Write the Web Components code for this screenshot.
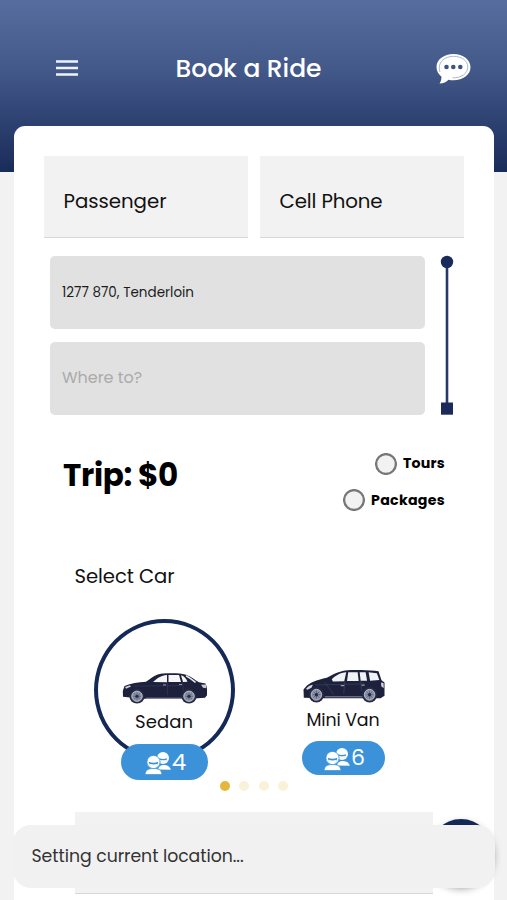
<!DOCTYPE html>
<html lang="en">
<head>
<meta charset="utf-8">
<meta name="viewport" content="width=device-width, initial-scale=1">
<title>Book a Ride</title>
<style>
    html, body { margin: 0; height: 100%; overflow: hidden; }
    body { background: #f2f2f2; font-family: Poppins, Inter, sans-serif; color: #111; }
</style>
</head>
<body>
<ride-app></ride-app>

<script>
class FitText extends HTMLElement {
    // Keeps a label at the width given in its "w" attribute by spreading the letters.
    constructor() {
        super();
        this.attachShadow({ mode: 'open' });
        this.shadowRoot.innerHTML = `
        <style>
            :host { display: inline-block; white-space: nowrap; }
            span { display: inline-block; }
        </style>
        <span><slot></slot></span>`;
    }

    connectedCallback() {
        const span = this.shadowRoot.querySelector('span');
        const want = parseFloat(this.getAttribute('w'));
        const n = this.textContent.length;
        const extra = (want - span.getBoundingClientRect().width) / n;
        span.style.letterSpacing = extra.toFixed(3) + 'px';
    }
}

class AppHeader extends HTMLElement {
    constructor() {
        super();
        this.attachShadow({ mode: 'open' });
        this.shadowRoot.innerHTML = `
        <style>
            :host {
                display: grid; grid-template-columns: 120px 1fr 120px; align-items: center;
                height: 172px; box-sizing: border-box; padding-bottom: 35px; margin-bottom: -46px;
                background: linear-gradient(#576d9f, #435989 40%, #2c4170 72%, #192b59);
                color: #fff;
            }
            .title { text-align: center; font-size: 25px; font-weight: 500; padding-right: 10px; }
            .menu { margin: -1px 0 0 56px; display: block; }
            .chat { justify-self: end; margin-right: 36.5px; display: block; }
        </style>
        <svg class="menu" width="22" height="16" viewBox="0 0 22 16">
            <path d="M0 1.500h22M0 8h22M0 14.500h22" stroke="#edf3fd" stroke-width="2.600"/>
        </svg>
        <div class="title"><slot></slot></div>
        <svg class="chat" width="36" height="32" viewBox="0 0 36 32">
            <path d="M19 1.500C9.500 1.500 2 7 2 14.500c0 4 2 7.500 5 9.700C7 27 6 29.500 5 31c4 0 7-1.500 9-3.800 1.600.4 3.300.5 5 .5 9.500 0 17-5.600 17-13S28.500 1.500 19 1.500z" transform="translate(-.5 -.5)" fill="#fff"/>
            <path d="M5 19C1.800 10 9 3.300 18.500 3.300c8 0 14.300 4.500 14.300 10.500 0 7-6.800 11.300-15.300 11" fill="none" stroke="#8a98b8" stroke-width=".7"/>
            <circle cx="11.500" cy="14" r="2.300" fill="#3e5383"/>
            <circle cx="18.300" cy="14" r="2.300" fill="#3e5383"/>
            <circle cx="25.300" cy="14" r="2.300" fill="#3e5383"/>
        </svg>`;
    }
}

class TextField extends HTMLElement {
    constructor() {
        super();
        this.attachShadow({ mode: 'open' });
        this.shadowRoot.innerHTML = `
        <style>
            :host {
                display: flex; align-items: center; box-sizing: border-box;
                height: 82px; padding: 8px 20px 0 19.5px; font-size: 19.8px;
                background: #f2f2f2; border-bottom: 1.5px solid #d8d8d8;
            }
        </style>
        <slot></slot>`;
    }
}

class RouteStop extends HTMLElement {
    constructor() {
        super();
        this.attachShadow({ mode: 'open' });
        this.shadowRoot.innerHTML = `
        <style>
            :host {
                display: flex; align-items: center; height: 73px; padding: 0 12px; box-sizing: border-box;
                border-radius: 5px; background: #e1e1e1; font-size: 13.5px; color: #1c1c1c;
            }
            :host([empty]) { font-size: 16px; color: #ababab; padding-bottom: 1px; }
        </style>
        <slot></slot>`;
    }
}

class RoutePicker extends HTMLElement {
    constructor() {
        super();
        this.attachShadow({ mode: 'open' });
        this.shadowRoot.innerHTML = `
        <style>
            :host { display: flex; gap: 16px; margin: 18.4px 11px 0 6px; height: 159px; }
            .stops { width: 375px; display: flex; flex-direction: column; gap: 12.6px; }
            svg { display: block; overflow: visible; }
        </style>
        <div class="stops"><slot></slot></div>
        <svg width="12" height="159" viewBox="0 0 12 159">
            <path d="M6 6v146" stroke="#26386a" stroke-width="2.600"/>
            <circle cx="6" cy="6" r="6.200" fill="#192b5b"/>
            <path d="M0 146.500h12v12.200H0z" fill="#192b5b"/>
        </svg>`;
    }
}

class RadioOption extends HTMLElement {
    constructor() {
        super();
        this.attachShadow({ mode: 'open' });
        this.shadowRoot.innerHTML = `
        <style>
            :host { display: flex; align-items: center; gap: 6px; font-size: 14.2px; font-weight: 700; color: #000; }
            svg { display: block; }
        </style>
        <svg width="22" height="22" viewBox="0 0 22 22">
            <circle cx="11" cy="11" r="9.900" fill="#f2f2f2" stroke="#777" stroke-width="2.300"/>
        </svg>
        <slot></slot>`;
    }
}

const WHEEL = (x) => `
    <circle cx="${x}" cy="24" r="7.600" fill="#252a43"/>
    <circle cx="${x}" cy="24" r="5.300" fill="#8d94aa" stroke="#c9ccd8" stroke-width=".8"/>
    <path d="M${x - 4} 24h8M${x} 20v8M${x - 3} 21l6 6M${x + 3} 21l-6 6" stroke="#555d78" stroke-width=".8"/>
    <circle cx="${x}" cy="24" r="1.600" fill="#252a43"/>`;

const CARS = {
    sedan: `
        <path d="M1 24.500L.8 18.500 2.500 13.500C9 10.500 16 9.500 24 9 30 4.500 35 .8 41 .5 50-.1 58 0 64 1.800 69 3.500 73 7.500 77 9.500l6.500 1.300L85 15v8l-2 2.500-15 1H20z" fill="#1d213b"/>
        <path d="M31 9.300C35 5.500 39 2.500 45 2.100V9.500zM46.500 2h10.500l2 7.300H46.500zM59 2.300c3 .7 5 3 6.500 6.700l-4.500.3z" fill="#f6f6f8"/>
        <path d="M64 2.800c4 2 7 4.800 9.500 7" fill="none" stroke="#e4e5eb" stroke-width="1.600"/>
        <path d="M3 14.500l5-1.800 1 1.200-5 2.400zM79 12.200l5-.4.5 4-3.500-.5z" fill="#cbccd7"/>
        <path d="M24 26h36" stroke="#a3a7b8" stroke-width=".8"/>
        <path d="M45.500 10v13M60.500 10l1 8M12 13.500l45-.5" fill="none" stroke="#343957" stroke-width=".7"/>
        <path d="M41 12.300h3M57 12h3" stroke="#c4c6d1" stroke-width=".8"/>
        ${WHEEL(15)}${WHEEL(67)}`,
    van: `
        <path d="M.8 27l-.3-8L4 15c6-4.500 13-6 20-7.500C32 3 38 .8 45 .2c10-.5 23-.2 31 1L79 10l3 2v13l-4 2.500H20z" fill="#1d213b"/>
        <path d="M29 8.900C33 5.300 37.500 2.700 43.500 2.300L41.500 11l-11.500.2zM45.500 2.100h9.500l1 8.500H44.300zM57 2.100l6 .1 1.500 8.200h-6.500zM66 2.300l8.300.8 2.500 6.500-9.300.8z" fill="#f1f2f5"/>
        <path d="M3 18.500c2-2.800 4-3.800 7-4.300l-1.500 3-4 2zM78.500 12l2.500.5.3 5-2.500-1.500z" fill="#d5d6de"/>
        <path d="M22 26h38" stroke="#a3a7b8" stroke-width=".8"/>
        <path d="M42 11l-1 12M58 11l1 9M12 14.500l50-1M22 12l9 12" fill="none" stroke="#3c425e" stroke-width=".7"/>
        <path d="M38 15.200h3.500M59 14.700h3" stroke="#c4c6d1" stroke-width=".9"/>
        ${WHEEL(13.5)}${WHEEL(67)}`
};

class CarOption extends HTMLElement {
    constructor() {
        super();
        this.attachShadow({ mode: 'open' });
    }

    connectedCallback() {
        const selected = this.hasAttribute('selected');
        const box = selected ? '0 0 86 32' : '0 0 82.5 32';
        this.shadowRoot.innerHTML = `
        <style>
            :host { display: block; width: 141px; text-align: center; font-size: 18px; }
            .ring {
                box-sizing: border-box; width: 141px; height: 142px; border-radius: 50%;
                border: 4px solid transparent; padding-top: 50px;
                display: flex; flex-direction: column; align-items: center;
            }
            :host([selected]) .ring { border-color: #152957; }
            .car { display: block; width: 86px; height: 31px; flex: none; margin-left: 1px; }
            .name { height: 24px; line-height: 24px; margin-top: 6.5px; }
            .seats {
                display: flex; align-items: center; justify-content: center; gap: 1px;
                width: 87px; height: 36px; margin: -17px auto 0; position: relative;
                border-radius: 18px; background: #3b92d9; color: #fff; font-size: 23px; font-weight: 400;
                box-sizing: border-box; padding-left: 3px;
            }
            .seats svg { margin-top: 2px; }
            .seats span { line-height: 36px; }
            :host(:not([selected])) { font-size: 17.4px; }
            :host(:not([selected])) .ring { padding-top: 47px; }
            :host(:not([selected])) .car { width: 82px; height: 33px; margin-left: 2px; }
            :host(:not([selected])) .name { margin-top: 5.5px; }
            :host(:not([selected])) .seats { width: 83px; height: 34px; margin-top: -20px; font-size: 22px; }
        </style>
        <div class="ring">
            <svg class="car" viewBox="${box}" preserveAspectRatio="none">${CARS[this.getAttribute('type')]}</svg>
            <div class="name"><slot></slot></div>
        </div>
        <div class="seats">
            <svg width="26" height="24" viewBox="0 0 26 24">
                <path d="M13 18.500c1-3.500 3-4.500 5-4.500s6.500 0 7.800 4.700z" fill="#fff"/>
                <circle cx="18" cy="6.900" r="6" fill="#fff"/>
                <path d="M14 7.200q4 1.500 8 0c0 5.500-7.500 5.500-8 0z" fill="#3b92d9"/>
                <path d="M14.500 8.800q3.500 1 7 0c0 3.500-6 3.500-7 0z" fill="#fff"/>
                <path d="M0 23.500c.5-4.500 3.500-6 8.500-6s8 1.500 8.500 6z" fill="#fff" stroke="#3b92d9" stroke-width=".7"/>
                <circle cx="8.500" cy="11" r="6.600" fill="#fff" stroke="#3b92d9" stroke-width=".8"/>
                <path d="M3.800 10.700q4.700 2 9.400 0c0 7-9 7-9.400 0z" fill="#3b92d9"/>
                <path d="M4.300 12.800q4.200 1.200 8.400 0c-.7 4.800-7.500 4.800-8.400 0z" fill="#fff"/>
            </svg>
            <span>${this.getAttribute('seats')}</span>
        </div>`;
    }
}

class PageDots extends HTMLElement {
    constructor() {
        super();
        this.attachShadow({ mode: 'open' });
        this.shadowRoot.innerHTML = `
        <style>
            :host { display: flex; justify-content: center; gap: 9.6px; }
            i { width: 10px; height: 10px; border-radius: 50%; background: #e3b83c; opacity: .2; }
            i.on { opacity: 1; }
        </style>
        <i class="on"></i><i></i><i></i><i></i>`;
    }
}

class SnackBar extends HTMLElement {
    constructor() {
        super();
        this.attachShadow({ mode: 'open' });
        this.shadowRoot.innerHTML = `
        <style>
            :host {
                position: absolute; left: 13px; right: 12.500px; top: 824.500px; height: 63.500px;
                box-sizing: border-box; padding: 0 18.5px; display: flex; align-items: center;
                border-radius: 18px; background: #f1f1f1; color: #333; font-size: 17.3px;
            }
        </style>
        <slot></slot>`;
    }
}

class RideApp extends HTMLElement {
    constructor() {
        super();
        this.attachShadow({ mode: 'open' });
    }

    connectedCallback() {
        this.shadowRoot.innerHTML = `
        <style>
            :host { display: block; position: relative; height: 900px; overflow: hidden; }
            main {
                position: relative; box-sizing: border-box; height: 800px; margin: 0 13px 0 13.5px;
                padding: 30px 30px 0 30.5px; border-radius: 11px; background: #fff;
            }
            .fields { display: grid; grid-template-columns: 204px 204px; gap: 12px; }
            .trip { display: flex; justify-content: space-between; margin: 37.600px 19px 0; height: 58.5px; }
            .price { font-size: 31px; font-weight: 700; color: #000; line-height: 44px; }
            .options { display: flex; flex-direction: column; align-items: flex-end; justify-content: space-between; }
            h2 { margin: 52px 0 0 30.500px; font-size: 19.6px; font-weight: 400; line-height: 26px; }
            .cars { display: flex; gap: 38px; margin: 29.500px 0 0 49.500px; height: 162px; }
            .bottom { display: flex; margin: 21px 0 0 31px; gap: 3px; }
            .bottom text-field { width: 358px; flex: none; }
            .fab {
                width: 64px; height: 64px; flex: none; margin: 7px -30px 0 -7px; border-radius: 50%;
                background: #152957; box-shadow: 0 5px 9px rgba(0, 0, 0, .45);
            }
        </style>
        <app-header><fit-text w="146">Book a Ride</fit-text></app-header>
        <main>
            <div class="fields">
                <text-field><fit-text w="103">Passenger</fit-text></text-field>
                <text-field><fit-text w="103">Cell Phone</fit-text></text-field>
            </div>
            <route-picker>
                <route-stop><fit-text w="132">1277 870, Tenderloin</fit-text></route-stop>
                <route-stop empty><fit-text w="80">Where to?</fit-text></route-stop>
            </route-picker>
            <div class="trip">
                <div class="price"><fit-text w="115">Trip: $0</fit-text></div>
                <div class="options">
                    <radio-option><fit-text w="42">Tours</fit-text></radio-option>
                    <radio-option><fit-text w="74">Packages</fit-text></radio-option>
                </div>
            </div>
            <h2><fit-text w="100">Select Car</fit-text></h2>
            <div class="cars">
                <car-option type="sedan" seats="4" selected><fit-text w="58">Sedan</fit-text></car-option>
                <car-option type="van" seats="6"><fit-text w="73">Mini Van</fit-text></car-option>
            </div>
            <page-dots></page-dots>
            <div class="bottom">
                <text-field></text-field>
                <div class="fab"></div>
            </div>
        </main>
        <snack-bar><fit-text w="212">Setting current location...</fit-text></snack-bar>`;
    }
}

customElements.define('app-header', AppHeader);
customElements.define('text-field', TextField);
customElements.define('route-stop', RouteStop);
customElements.define('route-picker', RoutePicker);
customElements.define('radio-option', RadioOption);
customElements.define('car-option', CarOption);
customElements.define('page-dots', PageDots);
customElements.define('snack-bar', SnackBar);
customElements.define('ride-app', RideApp);
// last, so every label is already laid out when it measures itself
customElements.define('fit-text', FitText);
</script>
</body>
</html>
